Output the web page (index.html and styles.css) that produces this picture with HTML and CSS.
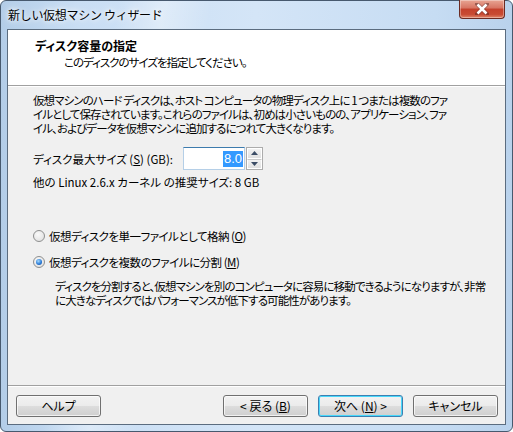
FILE: index.html
```html
<!DOCTYPE html>
<html>
<head>
    <title>新しい仮想マシン ウィザード</title>
    <link rel="stylesheet" href="styles.css">
</head>
<body>
<div class="window">
    <div class="titlebar">
        <span class="title">新しい仮想マシン ウィザード</span>
        <button class="close-button">
            <svg width="14" height="12" viewBox="0 0 14 12">
                <path d="M2 1 L12 11 M12 1 L2 11" stroke="#4a2020" stroke-width="4" stroke-linecap="square" opacity="0.45"/>
                <path d="M2.5 1.5 L11.5 10.5 M11.5 1.5 L2.5 10.5" stroke="#fff" stroke-width="2.6"/>
            </svg>
        </button>
    </div>

    <div class="client">
        <div class="header">
            <div class="header-title">ディスク容量の指定</div>
            <div class="header-subtitle">このディスクのサイズを指定してください。</div>
        </div>

        <div class="content">
            <p class="intro">仮想マシンのハード ディスクは、ホスト コンピュータの物理ディスク上に 1 つまたは複数のファ<br>イルとして保存されています。これらのファイルは、初めは小さいものの、アプリケーション、ファ<br>イル、およびデータを仮想マシンに追加するにつれて大きくなります。</p>

            <div class="size-row">
                <label for="disk-size">ディスク最大サイズ (<u>S</u>) (GB):</label>
                <div class="spin-box">
                    <div class="spin-input" id="disk-size"><span class="selected">8.0</span></div>
                    <div class="spin-buttons">
                        <span class="spin-button"><svg width="7" height="4" viewBox="0 0 7 4"><path d="M0 4 L3.5 0 L7 4 Z" fill="#3c4d66"/></svg></span>
                        <span class="spin-button"><svg width="7" height="4" viewBox="0 0 7 4"><path d="M0 0 L3.5 4 L7 0 Z" fill="#3c4d66"/></svg></span>
                    </div>
                </div>
            </div>

            <p class="recommended">他の Linux 2.6.x カーネル の推奨サイズ: 8 GB</p>

            <div class="radio-row first">
                <span class="radio"></span>
                <span>仮想ディスクを単一ファイルとして格納 (<u>O</u>)</span>
            </div>
            <div class="radio-row">
                <span class="radio checked"></span>
                <span>仮想ディスクを複数のファイルに分割 (<u>M</u>)</span>
            </div>
            <p class="radio-note">ディスクを分割すると、仮想マシンを別のコンピュータに容易に移動できるようになりますが、非常<br>に大きなディスクではパフォーマンスが低下する可能性があります。</p>
        </div>

        <div class="footer">
            <button class="button">ヘルプ</button>
            <div class="footer-right">
                <button class="button">&lt; 戻る (<u>B</u>)</button>
                <button class="button default">次へ (<u>N</u>) &gt;</button>
                <button class="button">キャンセル</button>
            </div>
        </div>
    </div>
</div>
</body>
</html>
```

FILE: styles.css
```css
html, body {
    margin: 0;
    padding: 0;
}

body {
    width: 513px;
    height: 432px;
    overflow: hidden;
    font-family: "Noto Sans CJK JP", "Liberation Sans", sans-serif;
    font-size: 12px;
    color: #000;
}

.window {
    box-sizing: border-box;
    width: 513px;
    height: 432px;
    border: 1px solid #47596e;
    border-radius: 6px;
    padding: 0 6px 6px 6px;
    display: flex;
    flex-direction: column;
    background:
        linear-gradient(100deg, rgba(255,255,255,0) 20%, rgba(255,255,255,0.35) 28%, rgba(255,255,255,0) 36%),
        linear-gradient(to right, #b3cde8 0%, #c9def4 15%, #d4e5f7 50%, #c6dcf3 85%, #b9d2ec 100%);
}

.titlebar {
    height: 28px;
    display: flex;
    justify-content: space-between;
    align-items: flex-start;
    padding-left: 1px;
    padding-right: 1px;
}

.title {
    line-height: 14px;
    margin-top: 7px;
    letter-spacing: -0.3px;
    text-shadow: 0 0 8px #fff, 0 0 4px #fff;
}

.close-button {
    width: 46px;
    height: 19px;
    margin-top: -1px;
    padding: 0;
    border: 1px solid #6b2b23;
    border-top: none;
    border-radius: 0 0 4px 4px;
    background: linear-gradient(to bottom, #e8a593 0%, #d77462 45%, #c4412c 50%, #c84b33 80%, #e0866a 100%);
    box-shadow: inset 0 0 0 1px rgba(255,255,255,0.35);
    display: flex;
    align-items: center;
    justify-content: center;
}

.client {
    flex: 1;
    display: flex;
    flex-direction: column;
    border: 1px solid #5b6c7f;
    background-color: #f0f0f0;
    font-size: 11.5px;
    font-feature-settings: "palt";
}

.header {
    height: 56px;
    background-color: #fff;
    border-bottom: 1px solid #a0a0a0;
    box-sizing: border-box;
    padding-top: 8px;
}

.header-title {
    font-size: 12px;
    font-weight: bold;
    line-height: 15px;
    padding-left: 27px;
}

.header-subtitle {
    line-height: 15px;
    margin-top: 2px;
    padding-left: 56px;
    letter-spacing: -1px;
}

.content {
    border-top: 1px solid #fff;
    padding: 6px 0 0 25px;
}

.intro,
.recommended,
.radio-note {
    margin: 0;
    line-height: 14px;
    white-space: nowrap;
}

.intro,
.radio-note {
    letter-spacing: -0.9px;
}

.size-row {
    display: flex;
    align-items: center;
    margin-top: 12px;
}

.size-row label {
    width: 150px;
}

.spin-box {
    display: flex;
    gap: 1px;
}

.spin-input {
    box-sizing: border-box;
    width: 62px;
    height: 23px;
    border: 1px solid #b5cfe7;
    border-top-color: #3d7bad;
    background-color: #fff;
    display: flex;
    align-items: center;
    justify-content: flex-end;
    padding-right: 1px;
    font-family: "Liberation Sans", sans-serif;
    font-size: 13px;
}

.selected {
    background-color: #3399ff;
    color: #fff;
    line-height: 16px;
    padding: 0 1px;
}

.spin-buttons {
    display: flex;
    flex-direction: column;
    border: 1px solid #acacac;
    box-sizing: border-box;
    height: 23px;
}

.spin-button {
    box-sizing: border-box;
    width: 15px;
    height: 10.5px;
    border: 1px solid #fff;
    background: linear-gradient(to bottom, #f2f2f2, #e0e0e0);
    display: flex;
    align-items: center;
    justify-content: center;
}

.spin-button + .spin-button {
    border-top: 1px solid #c8c8c8;
}

.recommended {
    margin-top: 5px;
}

.radio-row {
    display: flex;
    align-items: center;
    gap: 4px;
    line-height: 16px;
    margin-top: 10px;
    letter-spacing: -0.5px;
}

.radio-row.first {
    margin-top: 39px;
}

.radio {
    box-sizing: border-box;
    width: 12px;
    height: 12px;
    border-radius: 50%;
    border: 1px solid #8e8f8f;
    background: radial-gradient(circle at 40% 35%, #fafafa, #dcdcdc);
    display: flex;
    align-items: center;
    justify-content: center;
}

.radio.checked::after {
    content: "";
    width: 6px;
    height: 6px;
    border-radius: 50%;
    background: radial-gradient(circle at 40% 35%, #a8dcff 0%, #2d7ed9 55%, #0c3f8e 100%);
}

.radio-note {
    margin-top: 9px;
    padding-left: 22px;
}

.footer {
    margin-top: auto;
    border-top: 1px solid #a0a0a0;
    box-shadow: inset 0 1px #fff;
    padding: 9px 7px 7px 8px;
    display: flex;
    justify-content: space-between;
}

.footer-right {
    display: flex;
    gap: 10px;
}

.button {
    box-sizing: border-box;
    width: 85px;
    height: 22px;
    padding: 0;
    border: 1px solid #707070;
    border-radius: 3px;
    background: linear-gradient(to bottom, #f2f2f2 0%, #ebebeb 50%, #dddddd 50%, #cfcfcf 100%);
    box-shadow: inset 0 0 0 1px rgba(255,255,255,0.7);
    font-family: inherit;
    font-size: 12px;
    font-feature-settings: "palt";
    color: #000;
    line-height: 14px;
}

.button.default {
    border-color: #3c7fb1;
    box-shadow: inset 0 0 0 1px #48d8fb;
}
```
